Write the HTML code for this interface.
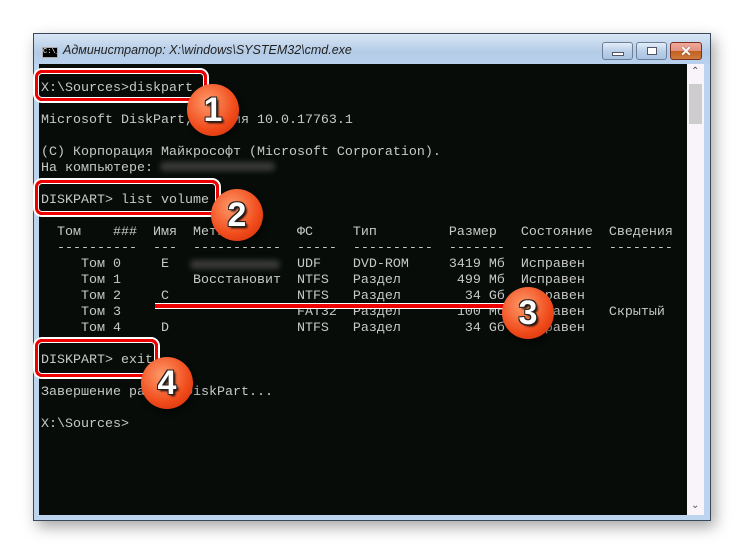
<!DOCTYPE html>
<html><head><meta charset="utf-8"><style>
*{margin:0;padding:0;box-sizing:border-box}
body{width:743px;height:554px;background:#fff;position:relative;overflow:hidden;font-family:"Liberation Sans",sans-serif}
.win{position:absolute;left:33px;top:33px;width:678px;height:488px;background:#bcd4ee;border:1px solid #3a4a5a;box-shadow:4px 6px 14px rgba(0,0,0,.35)}
.tb{position:absolute;left:0;top:0;width:676px;height:30px;background:linear-gradient(#d8e6f5,#b4cbe6 60%,#b9d1ec)}
.title{position:absolute;left:29px;top:9px;font-size:12.5px;font-style:italic;color:#222;white-space:nowrap}
.ico{position:absolute;left:8px;top:13px;width:16px;height:11px;background:#000;border:1px solid #aaa;color:#fff;font-size:7px;line-height:9px;font-family:"Liberation Mono",monospace;overflow:hidden}
.btn{position:absolute;top:8px;height:18px;border:1px solid #6b7f99;border-radius:3px;background:linear-gradient(#e3edf8,#bcd0ea 50%,#a9c2e2)}
.con{position:absolute;left:5px;top:30px;width:648px;height:451px;background:#070c08}
.sb{position:absolute;left:653px;top:30px;width:17px;height:451px;background:#f8f4fa}
pre{position:absolute;left:41px;top:81px;font-family:"Liberation Mono",monospace;font-size:13.33px;line-height:16px;color:#c8c8c8}
.box{position:absolute;border:3px solid #e00;border-radius:7px;box-shadow:0 0 0 2px #fff,inset 0 0 0 1px #fff}
.c{position:absolute;width:52px;height:52px;border-radius:50%;background:radial-gradient(circle at 40% 35%,#ff9a6a,#f04a1a 60%,#c82a08);box-shadow:2px 3px 6px rgba(0,0,0,.5);color:#fff;font:bold 34px/52px "Liberation Sans",sans-serif;text-align:center;text-shadow:-1px -1px 0 #222,1px -1px 0 #222,-1px 1px 0 #222,1px 1px 0 #222,2px 2px 2px #000}
.blur{position:absolute;background:#3a3a3a;filter:blur(3px);border-radius:4px}
</style></head><body>
<div class="win">
<div class="tb"><div class="ico">C:\_</div><div class="title">Администратор: X:\windows\SYSTEM32\cmd.exe</div>
<div class="btn" style="left:568px;width:31px"><div style="position:absolute;left:9px;top:9px;width:12px;height:4px;background:#fff;border:1px solid #556"></div></div>
<div class="btn" style="left:602px;width:31px"><div style="position:absolute;left:10px;top:4px;width:10px;height:8px;background:#fff;border:1px solid #556"></div></div>
<div class="btn" style="left:636px;width:32px;background:linear-gradient(#f0a898,#e29080 50%,#c0601c 50%,#d07a40);border-color:#7a3020;color:#fff;font:bold 14px/16px sans-serif;text-align:center;text-shadow:0 0 1px #333">✕</div>
</div>
<div class="con"></div>
<div class="sb"><div style="position:absolute;left:2px;top:20px;width:13px;height:40px;background:#cdcdcd"></div><div style="position:absolute;left:4px;top:2px;font-size:10px;color:#555">⌃</div><div style="position:absolute;left:4px;bottom:4px;font-size:10px;color:#555">⌄</div></div>
</div>
<div class="blur" style="left:160px;top:162px;width:115px;height:9px"></div>
<div class="blur" style="left:190px;top:260px;width:90px;height:9px"></div>
<pre>X:\Sources&gt;diskpart

Microsoft DiskPart, версия 10.0.17763.1

(C) Корпорация Майкрософт (Microsoft Corporation).
На компьютере:

DISKPART&gt; list volume

  Том    ###  Имя  Метка        ФС     Тип         Размер   Состояние  Сведения
  ----------  ---  -----------  -----  ----------  -------  ---------  --------
     Том 0     E                UDF    DVD-ROM     3419 Мб  Исправен
     Том 1         Восстановит  NTFS   Раздел       499 Мб  Исправен
     Том 2     C                NTFS   Раздел        34 Gб  Исправен
     Том 3                      FAT32  Раздел       100 Мб  Исправен   Скрытый
     Том 4     D                NTFS   Раздел        34 Gб  Исправен

DISKPART&gt; exit

Завершение работы DiskPart...

X:\Sources&gt;</pre>
<div style="position:absolute;left:155px;top:303px;width:360px;height:4px;background:#e00;border-top:1px solid #fff;border-bottom:1px solid #fff;box-sizing:content-box"></div>
<div class="box" style="left:35px;top:70px;width:172px;height:31px"></div>
<div class="box" style="left:35px;top:180px;width:184px;height:35px"></div>
<div class="box" style="left:35px;top:339px;width:123px;height:38px"></div>
<div class="c" style="left:187px;top:84px">1</div>
<div class="c" style="left:211px;top:189px">2</div>
<div class="c" style="left:502px;top:287px">3</div>
<div class="c" style="left:141px;top:357px">4</div>
</body></html>
